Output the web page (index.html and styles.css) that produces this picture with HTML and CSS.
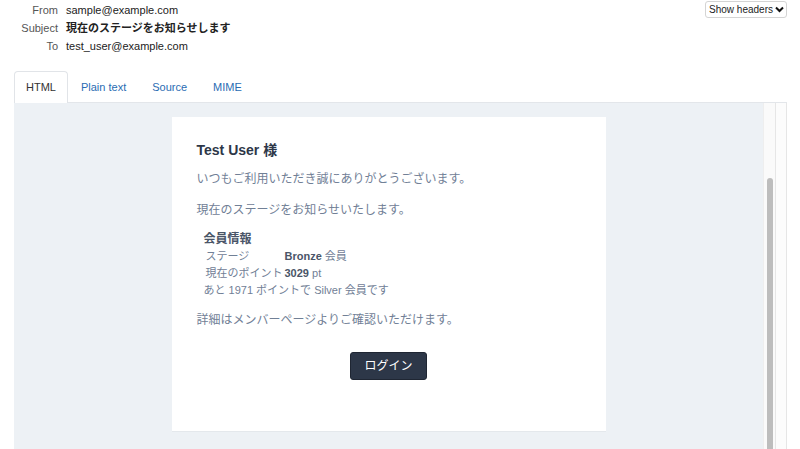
FILE: index.html
```html
<!DOCTYPE html>
<html lang="ja">
<head>
<meta charset="utf-8">
<title>Mail preview</title>
<link rel="stylesheet" href="styles.css">
</head>
<body>
<div class="top">
  <div class="headers">
    <div class="hrow"><span class="hlabel">From</span><span class="hval">sample@example.com</span></div>
    <div class="hrow"><span class="hlabel">Subject</span><span class="hval bold">現在のステージをお知らせします</span></div>
    <div class="hrow"><span class="hlabel">To</span><span class="hval">test_user@example.com</span></div>
  </div>
  <button class="show-btn">Show headers <svg class="chev" width="9" height="7" viewBox="0 0 9 7"><path d="M1 1.5 L4.5 5 L8 1.5" fill="none" stroke="#111" stroke-width="2"/></svg></button>
</div>
<div class="tabs">
  <span class="tab active">HTML</span>
  <span class="tab">Plain text</span>
  <span class="tab">Source</span>
  <span class="tab">MIME</span>
</div>
<div class="frame">
  <div class="viewport">
    <div class="card">
      <h1 class="greet">Test User 様</h1>
      <p class="p1">いつもご利用いただき誠にありがとうございます。</p>
      <p class="p2">現在のステージをお知らせいたします。</p>
      <div class="info">
        <div class="info-title">会員情報</div>
        <table class="info-table">
          <tr><td class="lab">ステージ</td><td><b>Bronze</b> 会員</td></tr>
          <tr><td class="lab">現在のポイント</td><td><b>3029</b> pt</td></tr>
        </table>
        <div class="remain">あと 1971 ポイントで Silver 会員です</div>
      </div>
      <p class="p3">詳細はメンバーページよりご確認いただけます。</p>
      <div class="btn-wrap"><span class="login">ログイン</span></div>
    </div>
  </div>
  <div class="vscroll"><div class="thumb"></div></div>
  <div class="side"></div>
</div>
</body>
</html>
```
FILE: styles.css
```css
html, body {
  margin: 0;
  padding: 0;
  height: 100%;
  overflow: hidden;
  background: #fff;
}
body {
  font-family: "Liberation Sans", "Noto Sans CJK JP", Arial, sans-serif;
  color: #222;
}
.top {
  display: flex;
  justify-content: space-between;
  align-items: flex-start;
  padding: 1px 13px 0 0;
  height: 71px;
  box-sizing: border-box;
}
.headers {
  display: flex;
  flex-direction: column;
}
.hrow {
  display: flex;
  height: 18px;
  line-height: 18px;
  font-size: 11px;
}
.hlabel {
  width: 58px;
  text-align: right;
  color: #555;
}
.hval {
  margin-left: 8px;
  color: #222;
}
.bold { font-weight: bold; }
.show-btn {
  font-family: "Liberation Sans", Arial, sans-serif;
  font-size: 10px;
  color: #222;
  background: #fff;
  border: 1px solid #d4d4d4;
  border-radius: 3px;
  height: 17px;
  padding: 0 2px 0 3px;
  display: flex;
  align-items: center;
  gap: 2px;
}
.chev { display: block; }
.tabs {
  display: flex;
  margin: 0 13px 0 14px;
  height: 31px;
  border-bottom: 1px solid #e3e6ea;
  font-size: 11px;
}
.tab {
  line-height: 32px;
  padding: 0 13px;
  color: #2a6cb3;
  white-space: nowrap;
}
.tab.active {
  color: #333;
  padding: 0 11px;
  border: 1px solid #e1e4e8;
  border-bottom: none;
  border-radius: 4px 4px 0 0;
  background: #fff;
  margin-bottom: -1px;
  height: 32px;
  line-height: 31px;
  box-sizing: border-box;
}
.frame {
  display: flex;
  margin: 0 13px 0 14px;
  height: 346px;
  overflow: hidden;
}
.viewport {
  flex: 1;
  background: #edf1f5;
  padding-top: 14px;
  display: flex;
  justify-content: center;
  align-items: flex-start;
}
.card {
  width: 434px;
  background: #fff;
  box-sizing: border-box;
  padding: 23px 25px 51px;
  border-bottom: 1px solid #e4e8ec;
  color: #718096;
}
.greet {
  margin: 0;
  font-size: 14px;
  line-height: 20px;
  font-weight: bold;
  color: #2d3748;
}
p {
  margin: 0;
  font-size: 12px;
  line-height: 18px;
}
.p1 { margin-top: 10px; }
.p2 { margin-top: 13px; }
.info {
  margin-top: 11px;
  padding-left: 7px;
  font-size: 11px;
  color: #718096;
}
.info-title {
  font-size: 12px;
  line-height: 18px;
  font-weight: bold;
  color: #4a5568;
}
.info-table {
  border-collapse: collapse;
  font-size: 11px;
}
.info-table td {
  padding: 0 0 0 2px;
  height: 17px;
  line-height: 17px;
  white-space: nowrap;
}
.info-table td.lab { width: 76px; }
.info-table b { color: #4a5568; }
.remain {
  line-height: 17px;
  height: 17px;
  white-space: nowrap;
}
.p3 { margin-top: 12px; }
.btn-wrap {
  margin-top: 23px;
  display: flex;
  justify-content: center;
}
.login {
  background: #2d3748;
  color: #fff;
  font-size: 12px;
  line-height: 26px;
  height: 28px;
  padding: 0 13px;
  border-radius: 3px;
  box-sizing: border-box;
  border: 1px solid #1f2633;
}
.vscroll {
  width: 11px;
  background: #fafafa;
  border-left: 1px solid #eee;
  border-right: 1px solid #e6e6e6;
  padding-top: 75px;
  display: flex;
  justify-content: center;
}
.thumb {
  width: 6px;
  height: 400px;
  background: #bdbdbd;
  border-radius: 3px;
}
.side {
  width: 10px;
  background: #fcfcfc;
  border-right: 1px solid #e6e6e6;
}
```
